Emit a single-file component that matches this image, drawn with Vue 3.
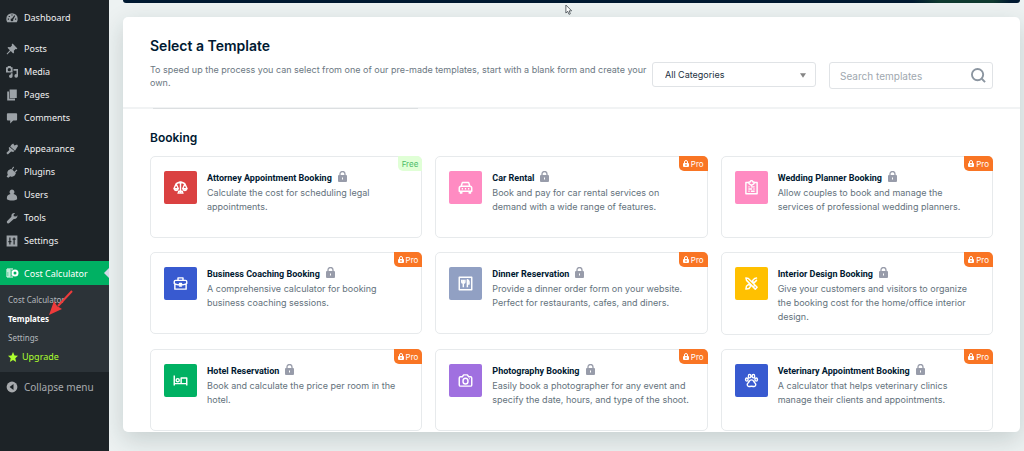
<script setup>
import { ref } from 'vue'

const category = ref('All Categories')
const search = ref('')

const menuGroups = [
  [{ label: 'Dashboard', icon: 'dashboard' }],
  [
    { label: 'Posts', icon: 'pin' },
    { label: 'Media', icon: 'media' },
    { label: 'Pages', icon: 'pages' },
    { label: 'Comments', icon: 'comment' },
  ],
  [
    { label: 'Appearance', icon: 'brush' },
    { label: 'Plugins', icon: 'plug' },
    { label: 'Users', icon: 'user' },
    { label: 'Tools', icon: 'wrench' },
    { label: 'Settings', icon: 'sliders' },
  ],
]

const menuIcons = {
  dashboard:
    'M10 2a9.500 9.500 0 0 0-9.500 9.500c0 2.200.6 4 1.600 5.500h15.800c1-1.500 1.600-3.300 1.600-5.500A9.500 9.500 0 0 0 10 2zM9 4h2v2H9zM4.500 6.500h2v2h-2zM3 11h2v2H3zm12 0h2v2h-2zm-1-5.500 1.200 1-3.200 6a2.200 2.200 0 1 1-2-1.500z',
  pin: 'M11 1l8 8-1.500 1.500-1.500-.5-3 3 .5 3L12 17.500l-4-4L2 19l-1-1 5.500-6-4-4L4 6.500l3 .5 3-3-.5-1.500z',
  media:
    'M0 2h2l1.500-2h4L9 2h2v9H0zm5.500 1.500a2.700 2.700 0 1 0 0 5.400 2.700 2.700 0 0 0 0-5.400zM12.500 5H20v11.500a3 3 0 1 1-2.500-2.900V8h-5zM11 12v5a3 3 0 1 1-3-3V12z',
  pages: 'M6 1h12v14H6zM2 4h3v12h10v3H2z',
  comment: 'M3 2h14a1.500 1.500 0 0 1 1.500 1.500v9A1.500 1.500 0 0 1 17 14h-5l-5 5v-5H3a1.500 1.500 0 0 1-1.500-1.500v-9A1.500 1.500 0 0 1 3 2z',
  brush: 'M9 3l3-2 2 3 4.500-1.500L20 5l-5 8-8-7zM6 6.500l8 7-2 1.500-3.500-1L3 19 .5 16.500l5-5-1-3.500z',
  plug: 'M12 1l1.500 1.500L10.500 6 14 9.500 17.500 6 19 7.500 15.500 11l1 1-2 4c-2 2-5 2.500-7.500 1l-3 2.500L1 18l2-3.500C1.500 12 2 9 4 7l4-2 1 1z',
  user: 'M10 1a4.200 4.200 0 0 1 2.500 7.500c3.500.5 6 2.500 6 6V17c-2 1.500-5 2-8.500 2s-6.500-.5-8.500-2v-2.500c0-3.500 2.500-5.500 6-6A4.200 4.200 0 0 1 10 1z',
  wrench: 'M17 7.500L19 5.500c.5 3-2 6.500-6 6L5.500 18.500c-2.500 2-5.500-1.500-3.500-3.500L9 8c-.7-4 2.500-7 6-6l-2.500 2.500.5 2.500z',
  sliders:
    'M1 1h18v18H1zM5.500 4v6H4v2h1.500v4h2v-4H9v-2H7.500V4zm7 0v2H11v2h1.500v8h2V8H16V6h-1.500V4z',
}

const categories = ['All Categories', 'Booking']

const templates = [
  { title: 'Attorney Appointment Booking', text: 'Calculate the cost for scheduling legal appointments.', color: 'red', icon: 'scales', free: true },
  { title: 'Car Rental', text: 'Book and pay for car rental services on demand with a wide range of features.', color: 'pink', icon: 'car' },
  { title: 'Wedding Planner Booking', text: 'Allow couples to book and manage the services of professional wedding planners.', color: 'pink', icon: 'clipboard' },
  { title: 'Business Coaching Booking', text: 'A comprehensive calculator for booking business coaching sessions.', color: 'blue', icon: 'briefcase' },
  { title: 'Dinner Reservation', text: 'Provide a dinner order form on your website. Perfect for restaurants, cafes, and diners.', color: 'slate', icon: 'dinner' },
  { title: 'Interior Design Booking', text: 'Give your customers and visitors to organize the booking cost for the home/office interior design.', color: 'yellow', icon: 'design' },
  { title: 'Hotel Reservation', text: 'Book and calculate the price per room in the hotel.', color: 'green', icon: 'bed' },
  { title: 'Photography Booking', text: 'Easily book a photographer for any event and specify the date, hours, and type of the shoot.', color: 'purple', icon: 'camera' },
  { title: 'Veterinary Appointment Booking', text: 'A calculator that helps veterinary clinics manage their clients and appointments.', color: 'blue', icon: 'paw' },
]

// Stroked outlines on a 24-unit grid
const tileIcons = {
  scales:
    'M12 4v16M7 21h10M9 18h6v3H9zM5 6l4-2 3 1 3-1 4 2M5 6l-3.500 8h7zM19 6l-3.500 8h7zM2 14.500c1 3 5 3 6 0M16 14.500c1 3 5 3 6 0M10 3h4',
  car: 'M5 10l2-6h10l2 6M5 10h14c2 0 3 1.500 3 3v5H2v-5c0-1.500 1-3 3-3zM4 18v3h2v-3M18 18v3h2v-3M6 14h2M16 14h2M11 14h2',
  clipboard: 'M8 4H3v18h18V4h-5M8 3h2a2 2 0 0 1 4 0h2v3l-4 2.500L8 6zM7 11h2M11 11h6M7 14.500h6M15 14.500h2M7 18h2M11 18h6',
  briefcase: 'M4 7h16a2 2 0 0 1 2 2v3c-3 2-6 2.500-10 2.500S5 14 2 12V9a2 2 0 0 1 2-2zM8 7V3h8v4M3 13v8h18v-8M10.500 12h3v4h-3z',
  dinner: 'M2 2h20v20H2zM6 6v4c0 2 5 2 5 0V6M8.500 6v12M15 18V6c2.500 1 3 4 2.500 7H15',
  design: 'M3 3l4 1 14 14-3 3L4 7zM21 3l-4 1-4 4M16 11l4-4zM11 16l-3 4-5 1 1-5 4-3M13 8l3 3M8 13l3 3M15 17l2-2',
  bed: 'M2 4v16M2 17h20M22 20V8h-9v9M5 11.500a2.500 2.500 0 1 1 5 0a2.500 2.500 0 1 1-5 0',
  camera: 'M4 6h3l2-3h6l2 3h3a2 2 0 0 1 2 2v11a2 2 0 0 1-2 2H4a2 2 0 0 1-2-2V8a2 2 0 0 1 2-2zM8 13a4 4.500 0 1 1 8 0a4 4.500 0 1 1-8 0M18 9h1',
  paw: 'M12 11c-4 0-3 3-5.500 5-3 2.500-.5 6.500 2.500 5.500 2-.6 4-.6 6 0 3 1 5.500-3 2.500-5.500C15 14 16 11 12 11zM7 5a2 2.800 0 1 1 4 0a2 2.800 0 1 1-4 0M13 5a2 2.800 0 1 1 4 0a2 2.800 0 1 1-4 0M2.500 10.500a2 2.500 0 1 1 4 0a2 2.500 0 1 1-4 0M17.500 10.500a2 2.500 0 1 1 4 0a2 2.500 0 1 1-4 0',
}
</script>

<template>
  <div class="page">
    <nav class="sidebar" aria-label="Admin menu">
      <ul v-for="(group, i) in menuGroups" :key="i" class="group">
        <li v-for="item in group" :key="item.label">
          <a href="#" class="item">
            <svg class="menu-icon" viewBox="0 0 20 20" aria-hidden="true"><path :d="menuIcons[item.icon]" fill-rule="evenodd" /></svg>
            {{ item.label }}
          </a>
        </li>
      </ul>
      <a href="#" class="item current">
        <svg class="calc-icon" viewBox="0 0 26 20" aria-hidden="true">
          <path d="M14 2H2v16h12M2 6h9M5 10h5M5 14h6M6 2v16" fill="none" stroke="currentColor" stroke-width="2" />
          <circle cx="18" cy="10" r="5" fill="none" stroke="currentColor" stroke-width="4" />
        </svg>
        Cost Calculator
      </a>
      <ul class="submenu">
        <li><a href="#">Cost Calculator</a></li>
        <li><a href="#" class="selected">Templates</a></li>
        <li><a href="#">Settings</a></li>
        <li>
          <a href="#" class="upgrade">
            <svg viewBox="0 0 20 20" aria-hidden="true"><path d="M10 0l3 7 7 .6-5.400 4.800L16.300 20 10 16l-6.300 4 1.700-7.600L0 7.600 7 7z" /></svg>
            Upgrade
          </a>
        </li>
      </ul>
      <button type="button" class="collapse">
        <svg viewBox="0 0 20 20" aria-hidden="true">
          <circle cx="10" cy="10" r="9" fill="#a7aaad" />
          <path d="M12.500 5v10L6 10z" fill="#1d2327" />
        </svg>
        Collapse menu
      </button>
      <svg class="pointer" viewBox="0 0 24 25" aria-hidden="true">
        <path d="M23 1L9 16" stroke="#ee3b3b" stroke-width="2" />
        <path d="M0 25L5 11l3 5 5 3z" fill="#ee3b3b" />
      </svg>
    </nav>

    <main class="content">
      <div class="banner"></div>
      <section class="panel">
        <header class="panel-head">
          <div class="intro">
            <h1>Select a Template</h1>
            <p>To speed up the process you can select from one of our pre-made templates, start with a blank form and create your own.</p>
          </div>
          <div class="controls">
            <div class="field">
              <select v-model="category" aria-label="Category">
                <option v-for="c in categories" :key="c">{{ c }}</option>
              </select>
              <svg class="caret" viewBox="0 0 8 6" aria-hidden="true"><path d="M0 0h8L4 6z" /></svg>
            </div>
            <div class="field">
              <input v-model="search" type="search" placeholder="Search templates" aria-label="Search templates" />
              <svg class="glass" viewBox="0 0 16 16" aria-hidden="true"><circle cx="7" cy="7" r="6" /><path d="M11.500 11.500l3.500 3.500" /></svg>
            </div>
          </div>
        </header>

        <div class="panel-body">
          <h2>Booking</h2>
          <div class="grid">
            <article v-for="t in templates" :key="t.title" class="card">
              <div class="tile" :class="t.color">
                <svg viewBox="0 0 24 24" aria-hidden="true"><path :d="tileIcons[t.icon]" /></svg>
              </div>
              <div class="info">
                <h3>
                  {{ t.title }}
                  <svg class="lock" viewBox="0 0 9 11" aria-hidden="true">
                    <path d="M2 5V3a2.500 2.500 0 0 1 5 0v2" fill="none" stroke="#989caa" stroke-width="1.300" />
                    <rect y="4" width="9" height="7" rx="1" fill="#989caa" />
                    <path d="M4.500 6.500v2" stroke="#fff" />
                  </svg>
                </h3>
                <p>{{ t.text }}</p>
              </div>
              <span v-if="t.free" class="badge free">Free</span>
              <span v-else class="badge pro">
                <svg viewBox="0 0 6 7" aria-hidden="true">
                  <path d="M1.500 3.500V2a1.500 1.500 0 0 1 3 0v1.500" fill="none" stroke="#fff" />
                  <rect y="3" width="6" height="4" rx="1" fill="#fff" />
                  <path d="M3 4v2" stroke="#f97524" />
                </svg>
                Pro
              </span>
            </article>
          </div>
        </div>
      </section>
      <svg class="cursor" viewBox="0 0 9 12" aria-hidden="true">
        <path d="M1 1v9l2-2 1.500 3.500 1.500-.7L4.700 7.500H7.500z" fill="#fff" stroke="#4b5258" />
      </svg>
    </main>
  </div>
</template>

<style>
body {
  margin: 0;
  background: #edf2f2;
}
</style>

<style scoped>
* {
  box-sizing: border-box;
}

.page {
  display: flex;
  min-height: 100vh;
  font-family: Inter, "Liberation Sans", sans-serif;
}

ul,
h1,
h2,
h3,
p {
  margin: 0;
  padding: 0;
}

ul {
  list-style: none;
}

a {
  color: inherit;
  text-decoration: none;
}

.sidebar {
  position: relative;
  flex: 0 0 109px;
  padding-top: 6px;
  background: #1d2327;
  color: #f0f0f1;
  font-family: "Noto Sans", "Open Sans", sans-serif;
  font-size: 9px;
}

.group {
  margin-bottom: 8px;
}

.item {
  display: flex;
  align-items: center;
  gap: 6px;
  height: 23px;
  padding-left: 6px;
}

.menu-icon {
  width: 12px;
  height: 12px;
  fill: #9ca2a7;
}

.current {
  position: relative;
  gap: 5px;
  height: 24px;
  margin-top: 9px;
  background: #00b163;
  color: #fff;
}

.calc-icon {
  width: 13px;
  height: 10px;
}

.current::after {
  content: "";
  position: absolute;
  right: 0;
  top: 7px;
  border: 5px solid transparent;
  border-left: 0;
  border-right-color: #d5d9e8;
}

.submenu {
  padding: 5px 0 6px 8px;
  background: #2c3338;
  color: #b4b9be;
  font-size: 8px;
  line-height: 19px;
}

.submenu a {
  display: flex;
  align-items: center;
}

.submenu .selected {
  color: #fff;
  font-weight: 700;
}

.submenu .upgrade {
  gap: 4px;
  color: #adff2f;
  font-size: 9px;
}

.upgrade svg {
  width: 10px;
  height: 10px;
  fill: #adff2f;
}

.collapse {
  display: flex;
  align-items: center;
  gap: 6px;
  height: 29px;
  padding: 0 0 0 6px;
  border: 0;
  background: none;
  color: #a7aaad;
  font: 10px "Noto Sans", "Open Sans", sans-serif;
}

.collapse svg {
  width: 12px;
  height: 12px;
}

.pointer {
  position: absolute;
  left: 49px;
  top: 290px;
  width: 24px;
  height: 25px;
}

.content {
  position: relative;
  flex: 1;
  min-width: 0;
  padding: 0 4px 19px 14px;
  overflow: hidden;
}

.banner {
  height: 3px;
  border-radius: 0 0 4px 4px;
  background: linear-gradient(90deg, #001931 88%, #103a30 91%, #103a30 97%, #001931 99%);
}

.panel {
  margin-top: 14px;
  padding-bottom: 1px;
  border-radius: 5px;
  background: #fff;
  box-shadow: 0 8px 24px rgba(20, 50, 50, 0.18);
}

.panel-head {
  display: flex;
  align-items: flex-end;
  gap: 3px;
  padding: 19px 27px 18px;
  border-bottom: 2px solid #f1f3f4;
}

.intro {
  flex: 1;
}

h1 {
  margin-bottom: 7px;
  color: #001931;
  font-size: 14px;
  font-weight: 600;
  line-height: 20px;
}

.intro p {
  color: #6c7882;
  font-size: 9px;
  line-height: 13px;
}

.controls {
  display: flex;
  align-items: flex-start;
  gap: 13px;
}

.field {
  position: relative;
  width: 164px;
}

select,
input {
  display: block;
  width: 100%;
  margin: 0;
  padding: 0 32px 0 12px;
  border: 1px solid #e0e3e6;
  border-radius: 3px;
  outline: 0;
  background: #fff;
  font-family: inherit;
  appearance: none;
}

select {
  height: 25px;
  color: #1c2f40;
  font-size: 9px;
}

input {
  height: 27px;
  padding-left: 10px;
  color: #1c2f40;
  font-size: 10px;
}

input::placeholder {
  color: #a0a8af;
}

.caret {
  position: absolute;
  right: 10px;
  top: 11px;
  width: 6px;
  height: 5px;
  fill: #858585;
  pointer-events: none;
}

.glass {
  position: absolute;
  right: 7px;
  top: 6px;
  width: 15px;
  height: 15px;
  fill: none;
  stroke: #8b95a0;
  stroke-width: 2;
}

.panel-body {
  position: relative;
  padding: 21px 27px 0;
}

/* Lower edge of the row scrolled under the header */
.panel-body::before {
  content: "";
  position: absolute;
  left: 30px;
  top: -1px;
  width: 265px;
  height: 1px;
  background: #dcdfe1;
}

h2 {
  margin-bottom: 10px;
  color: #001931;
  font-size: 12px;
  font-weight: 600;
  line-height: 16px;
}

.grid {
  display: grid;
  grid-template-columns: repeat(3, 1fr);
  gap: 14px 13px;
  align-items: start;
}

.card {
  position: relative;
  display: flex;
  gap: 10px;
  min-height: 82px;
  padding: 14px 13px 10px;
  border: 1px solid #e7eaec;
  border-radius: 5px;
}

.tile {
  display: flex;
  flex: 0 0 33px;
  align-items: center;
  justify-content: center;
  height: 33px;
  border-radius: 2px;
}

.tile svg {
  width: 15px;
  height: 15px;
  fill: none;
  stroke: #fff;
  stroke-width: 2.3;
  stroke-linejoin: round;
}

.red { background: #da4141; }
.pink { background: #ff8bc2; }
.blue { background: #385ad0; }
.slate { background: #91a0c3; }
.yellow { background: #ffc000; }
.green { background: #00b163; }
.purple { background: #a070e0; }

.info {
  flex: 1;
}

h3 {
  display: flex;
  gap: 6px;
  height: 15px;
  color: #001931;
  font: 700 9px/14px Roboto, Inter, sans-serif;
}

.lock {
  width: 9px;
  height: 11px;
}

.info p {
  color: #64727c;
  font-size: 9px;
  line-height: 14px;
}

.badge {
  position: absolute;
  top: -1px;
  right: -1px;
  display: flex;
  align-items: center;
  gap: 2px;
  height: 15px;
  padding: 0 4px;
  border-radius: 0 5px;
  font-size: 8px;
}

.free {
  background: #e0ffd6;
  color: #4dbb68;
}

.pro {
  background: #f97524;
  color: #fff;
}

.badge svg {
  width: 6px;
  height: 7px;
}

.cursor {
  position: absolute;
  left: 456px;
  top: 4px;
  width: 8px;
  height: 11px;
}
</style>
